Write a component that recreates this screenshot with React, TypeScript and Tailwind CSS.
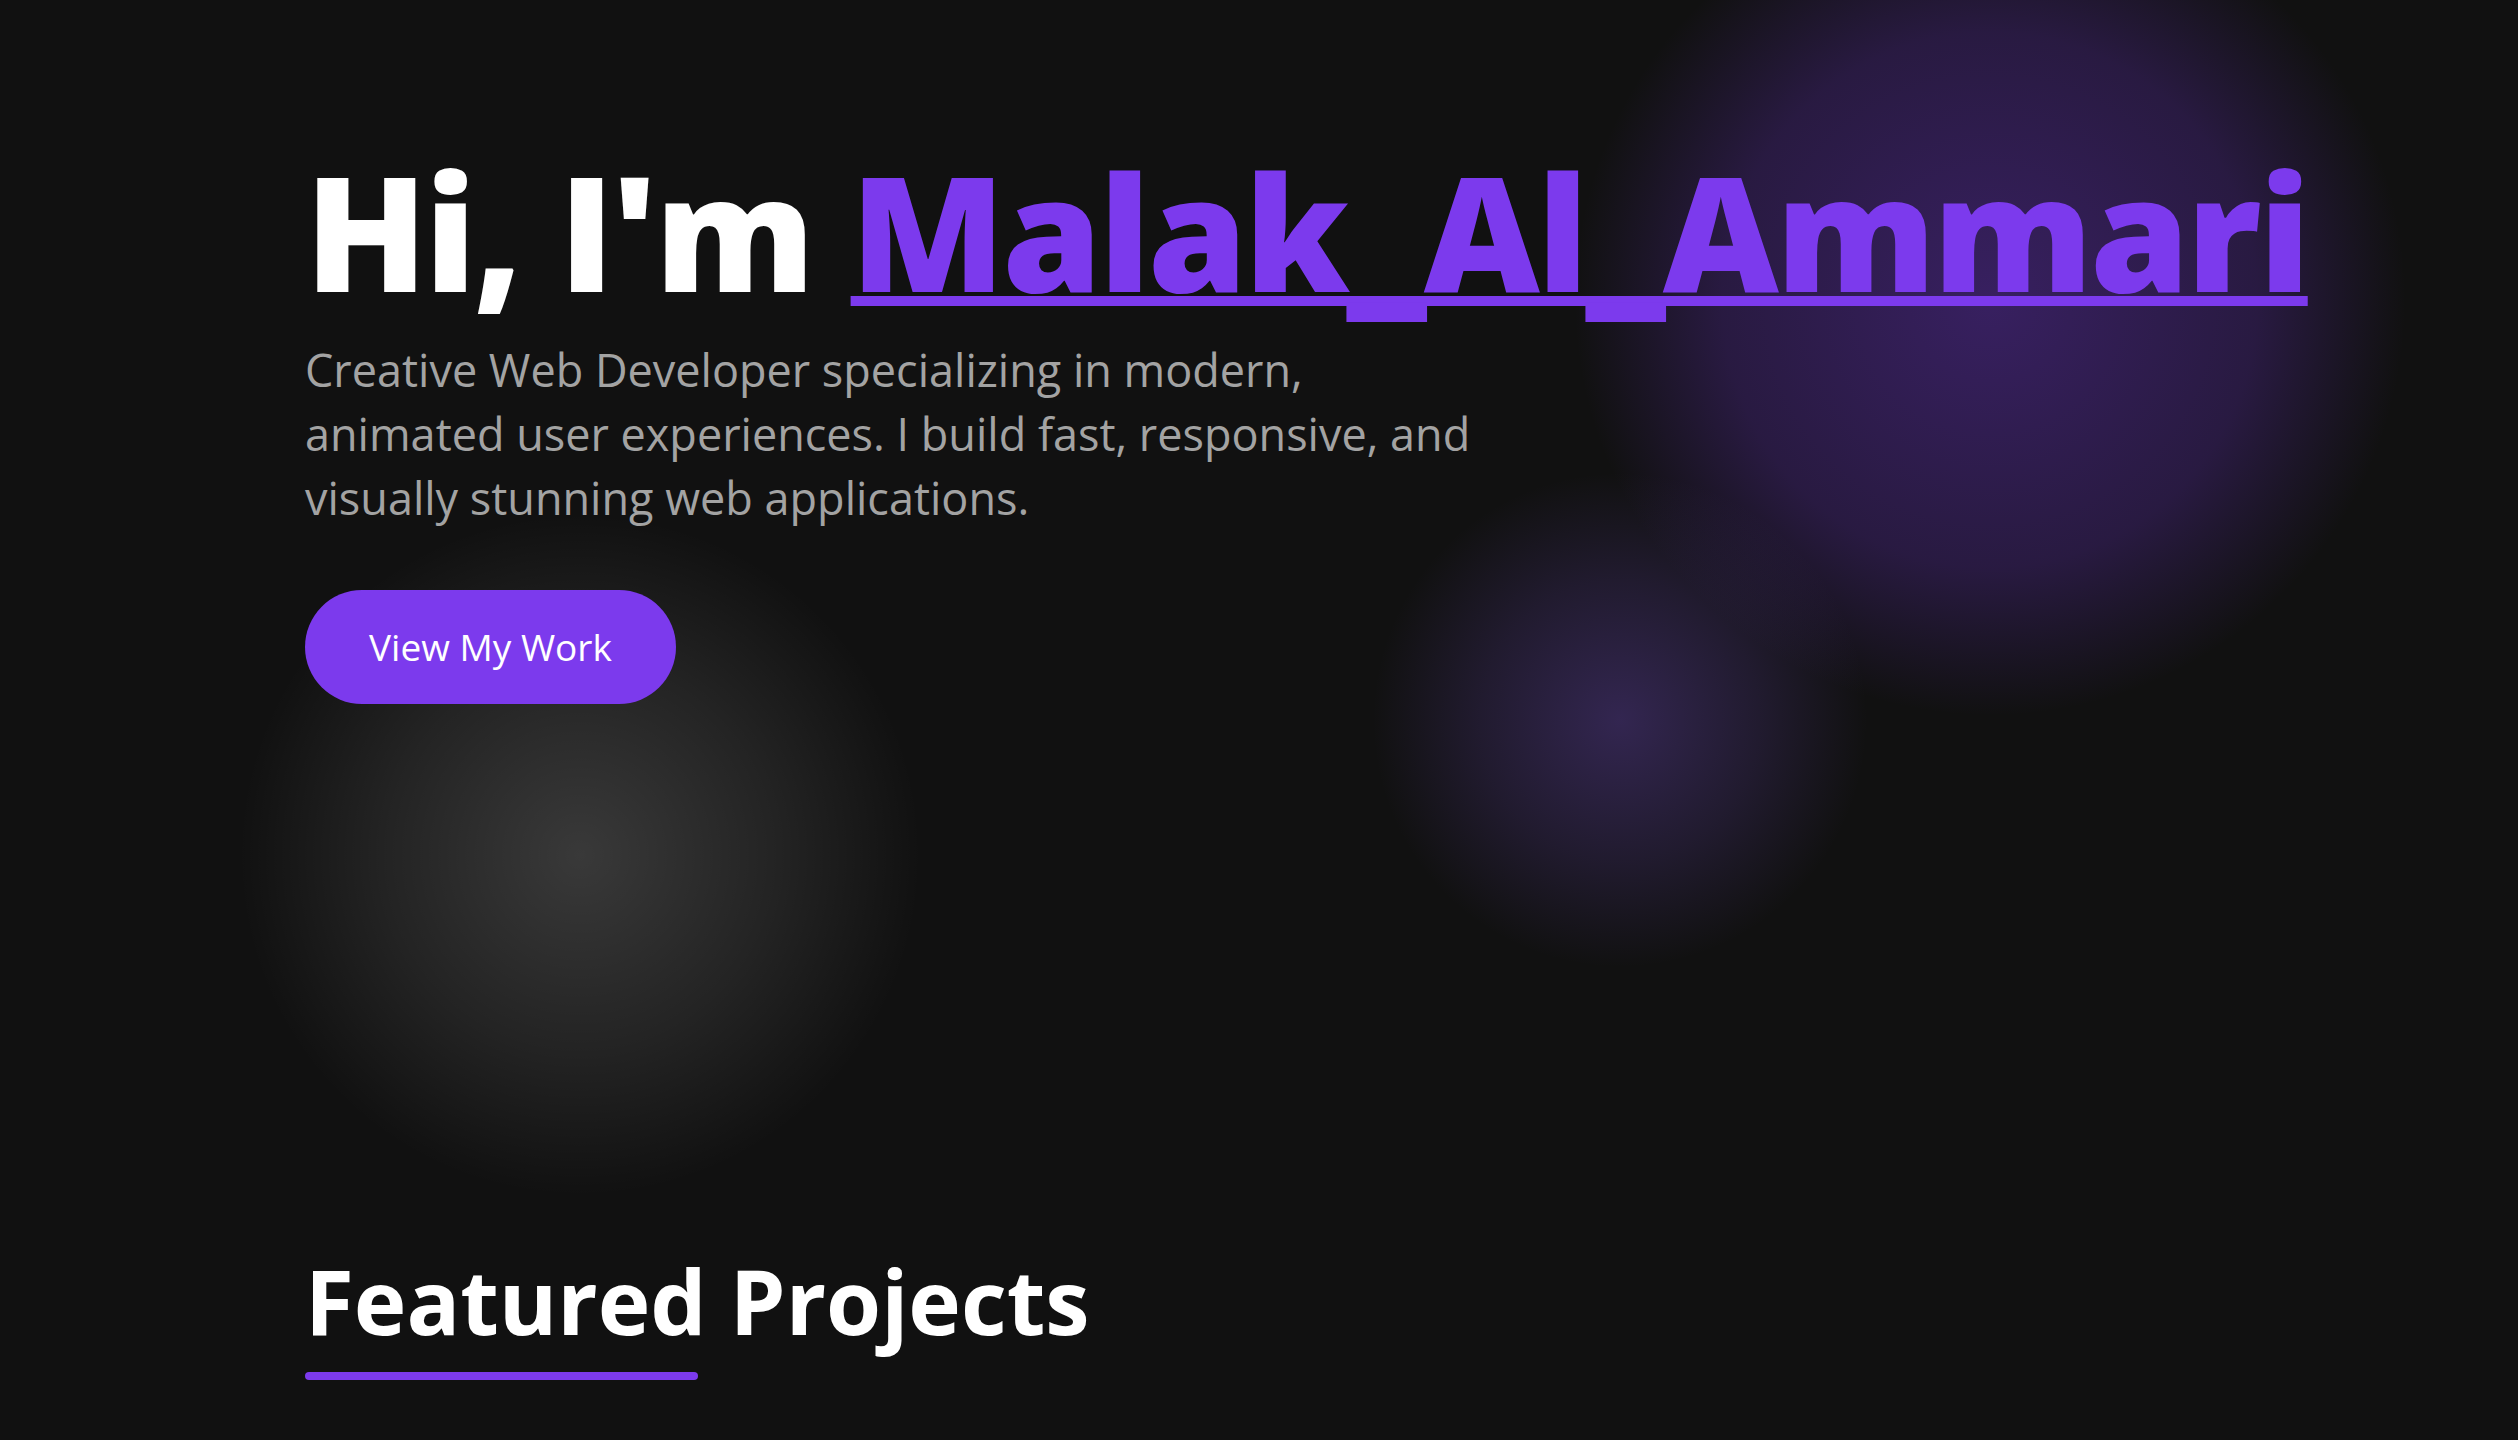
import React from 'react';

const Blob: React.FC<{ className: string }> = ({ className }) => (
  <div className={`pointer-events-none absolute rounded-full ${className}`} />
);

export default function App() {
  return (
    <div className="relative min-h-screen overflow-hidden bg-[#111111] text-white" style={{ fontFamily: '"Open Sans", "Noto Sans", sans-serif' }}>
      {/* background glows */}
      <Blob className="left-[1570px] top-[-120px] h-[840px] w-[840px] bg-[radial-gradient(circle,rgba(124,58,237,0.36)_0%,rgba(124,58,237,0.22)_45%,rgba(124,58,237,0)_70%)]" />
      <Blob className="left-[1370px] top-[470px] h-[500px] w-[500px] bg-[radial-gradient(circle,rgba(139,92,246,0.28)_0%,rgba(139,92,246,0.13)_40%,rgba(139,92,246,0)_70%)]" />
      <Blob className="left-[235px] top-[510px] h-[690px] w-[690px] bg-[radial-gradient(circle,rgba(255,255,255,0.17)_0%,rgba(255,255,255,0.08)_40%,rgba(255,255,255,0)_70%)]" />

      <main className="relative flex flex-col pl-[305px] pr-[200px]">
        <section className="flex flex-col items-start pt-[150px]">
          <h1 className="whitespace-nowrap text-[160px] font-extrabold leading-[1] tracking-[-3px]">
            Hi, I'm{' '}
            <span className="text-[#7c3aed] underline decoration-[10px] underline-offset-[4px]">Malak_Al_Ammari</span>
          </h1>
          <p className="mt-[28px] max-w-[1180px] text-[45px] leading-[64px] text-[#a3a3a3]">
            Creative Web Developer specializing in modern, animated user experiences. I build fast, responsive, and visually stunning web applications.
          </p>
          <button className="mt-[60px] h-[114px] rounded-full bg-[#7c3aed] px-[64px] text-[37px] text-white">
            View My Work
          </button>
        </section>

        <section className="flex flex-col items-start gap-[22px] pt-[548px] pb-[200px]">
          <h2 className="text-[89px] font-bold leading-[1.1]">Featured Projects</h2>
          <div className="h-[8px] w-[393px] rounded-full bg-[#7c3aed]" />
        </section>
      </main>
    </div>
  );
}
